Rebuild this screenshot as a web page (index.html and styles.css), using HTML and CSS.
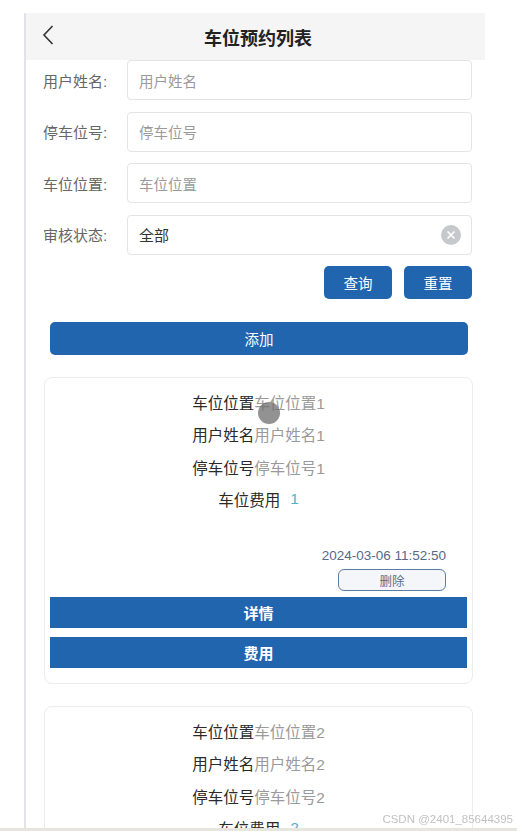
FILE: index.html
```html
<!DOCTYPE html>
<html lang="zh">
<head>
<meta charset="utf-8">
<title>车位预约列表</title>
<link rel="stylesheet" href="styles.css">
</head>
<body>
<div class="frame">
  <header class="topbar">
    <svg class="back" width="14" height="22" viewBox="0 0 14 22"><path d="M11.5 2 L3 11 L11.5 20" fill="none" stroke="#333" stroke-width="1.6"/></svg>
    <h1 class="title">车位预约列表</h1>
  </header>

  <form class="search">
    <div class="row"><label class="lbl">用户姓名:</label><div class="field"><span class="ph">用户姓名</span></div></div>
    <div class="row"><label class="lbl">停车位号:</label><div class="field"><span class="ph">停车位号</span></div></div>
    <div class="row"><label class="lbl">车位位置:</label><div class="field"><span class="ph">车位位置</span></div></div>
    <div class="row"><label class="lbl">审核状态:</label><div class="field"><span class="val">全部</span>
      <svg class="clear" width="20" height="20" viewBox="0 0 20 20"><circle cx="10" cy="10" r="10" fill="#c6c8cc"/><path d="M6.5 6.5 L13.5 13.5 M13.5 6.5 L6.5 13.5" stroke="#fff" stroke-width="1.6"/></svg></div></div>
    <div class="actions"><span class="btn">查询</span><span class="btn">重置</span></div>
  </form>

  <div class="add">添加</div>

  <div class="card">
    <div class="line"><span class="k">车位位置</span><span class="v">车位位置1</span></div>
    <div class="line"><span class="k">用户姓名</span><span class="v">用户姓名1</span></div>
    <div class="line"><span class="k">停车位号</span><span class="v">停车位号1</span></div>
    <div class="line"><span class="k">车位费用</span><span class="fee">1</span></div>
    <div class="time">2024-03-06 11:52:50</div>
    <div class="delrow"><span class="del">删除</span></div>
    <div class="bar first">详情</div>
    <div class="bar">费用</div>
    <span class="touch"></span>
  </div>

  <div class="card">
    <div class="line"><span class="k">车位位置</span><span class="v">车位位置2</span></div>
    <div class="line"><span class="k">用户姓名</span><span class="v">用户姓名2</span></div>
    <div class="line"><span class="k">停车位号</span><span class="v">停车位号2</span></div>
    <div class="line"><span class="k">车位费用</span><span class="fee">2</span></div>
    <div class="time">2024-03-06 11:52:50</div>
    <div class="delrow"><span class="del">删除</span></div>
    <div class="bar first">详情</div>
    <div class="bar">费用</div>
  </div>
</div>
<div class="mark">CSDN @2401_85644395</div>
<div class="scroll"></div>
</body>
</html>
```

FILE: styles.css
```css
html, body {
  margin: 0;
  padding: 0;
  background: #fff;
  font-family: "Liberation Sans", "Noto Sans CJK SC", sans-serif;
  color: #333;
}
.frame {
  margin: 13px 0 0 24px;
  width: 459px;
  border-left: 2px solid #e2e2ea;
  min-height: 900px;
}
.topbar {
  height: 47px;
  background: #f5f5f5;
  display: flex;
  align-items: center;
  justify-content: center;
  position: relative;
}
.back {
  position: absolute;
  left: 15px;
  top: 11px;
}
.title {
  margin: 0 0 0 5px;
  font-size: 18px;
  font-weight: bold;
  color: #222;
}
.search {
  padding: 0 13px 0 17px;
  display: flex;
  flex-direction: column;
  gap: 11.6px;
}
.row {
  display: flex;
  align-items: center;
}
.lbl {
  width: 84px;
  font-size: 15px;
  color: #666;
}
.field {
  flex: 1;
  height: 38px;
  border: 1px solid #e4e4e4;
  border-radius: 4px;
  display: flex;
  align-items: center;
  padding: 0 10px 0 11px;
  font-size: 14.5px;
}
.ph { color: #9a9a9a; flex: 1; }
.val { color: #333; flex: 1; font-size: 15px; }
.clear { flex: none; }
.actions {
  display: flex;
  justify-content: flex-end;
  gap: 12px;
}
.btn {
  width: 68px;
  height: 33px;
  border-radius: 5px;
  background: #2265af;
  color: #fff;
  font-size: 14.5px;
  display: flex;
  align-items: center;
  justify-content: center;
}
.add {
  margin: 23px 17px 0 24px;
  height: 33px;
  border-radius: 5px;
  background: #2265af;
  color: #fff;
  font-size: 14.5px;
  display: flex;
  align-items: center;
  justify-content: center;
}
.card {
  position: relative;
  margin: 22px 12px 0 18px;
  border: 1px solid #ececec;
  border-radius: 8px;
  padding: 7px 5px 15px 5px;
}
.line {
  height: 32.5px;
  display: flex;
  align-items: center;
  justify-content: center;
  font-size: 15.5px;
}
.k { color: #2a2a2a; }
.v { color: #9a9a9a; }
.fee { color: #4db3cb; margin-left: 10px; }
.time {
  margin-top: 31px;
  text-align: right;
  padding-right: 21px;
  font-size: 13.5px;
  line-height: 20px;
  color: #55698a;
}
.delrow {
  display: flex;
  justify-content: flex-end;
  padding-right: 21px;
  margin-top: 3px;
}
.del {
  width: 106px;
  height: 20px;
  border: 1px solid #5c7ca4;
  border-radius: 6px;
  background: #f4f6f9;
  color: #5a6d8c;
  font-size: 12.5px;
  display: flex;
  align-items: center;
  justify-content: center;
}
.bar {
  height: 31px;
  background: #2265af;
  color: #fff;
  font-size: 15px;
  font-weight: bold;
  display: flex;
  align-items: center;
  justify-content: center;
  margin-top: 9px;
}
.bar.first { margin-top: 6px; }
.touch {
  position: absolute;
  left: 213px;
  top: 24px;
  width: 22px;
  height: 22px;
  border-radius: 50%;
  background: rgba(110, 110, 110, 0.75);
}
.mark {
  position: fixed;
  right: 4px;
  bottom: 6px;
  font-size: 11.5px;
  color: #c2c2c2;
}
.scroll {
  position: fixed;
  left: 0;
  right: 0;
  bottom: 0;
  height: 3px;
  background: #e6e6df;
}
```
